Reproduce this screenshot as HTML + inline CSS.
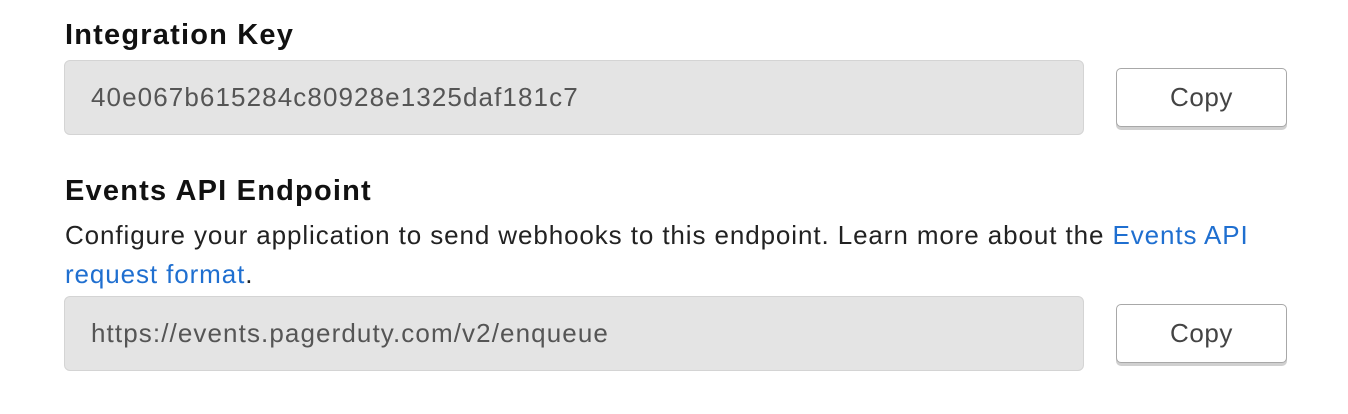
<!DOCTYPE html>
<html><head><style>
body{margin:0;width:1348px;height:414px;background:#fff;font-family:"Liberation Sans",sans-serif;position:relative;overflow:hidden}
.h{position:absolute;left:65px;font-weight:bold;font-size:29px;color:#111;letter-spacing:1.2px}
.in{position:absolute;left:64px;width:1020px;height:75px;background:#e4e4e4;border:1px solid #d4d4d4;border-radius:6px;box-sizing:border-box;font-size:26px;color:#555;padding-left:26px;line-height:73px;letter-spacing:1.1px}
.b{position:absolute;left:1116px;width:171px;height:59px;border:1px solid #a8a8a8;border-radius:5px;box-sizing:border-box;background:#fff;box-shadow:0 3px 0 #d0d0d0;font-size:26px;color:#444;text-align:center;line-height:57px;letter-spacing:0.6px}
.p{position:absolute;left:65px;top:216px;font-size:26px;color:#222;line-height:39px;width:1260px;letter-spacing:0.9px}
a{color:#1f6fd0;text-decoration:none}
</style></head><body>
<div class="h" style="top:19px">Integration Key</div>
<div class="in" style="top:60px">40e067b615284c80928e1325daf181c7</div>
<div class="b" style="top:68px">Copy</div>
<div class="h" style="top:175px">Events API Endpoint</div>
<div class="p">Configure your application to send webhooks to this endpoint. Learn more about the <a>Events API<br>request format</a>.</div>
<div class="in" style="top:296px">https://events.pagerduty.com/v2/enqueue</div>
<div class="b" style="top:304px">Copy</div>
</body></html>
